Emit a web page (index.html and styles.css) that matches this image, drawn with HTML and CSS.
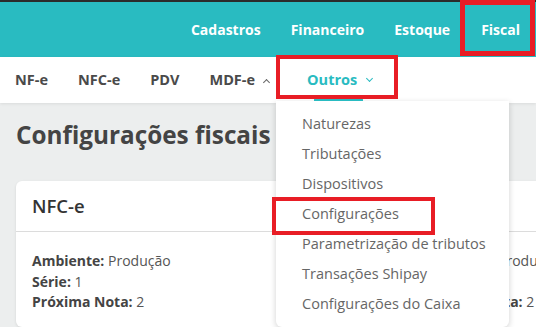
FILE: index.html
```html
<!DOCTYPE html>
<html lang="pt-BR">
<head>
    <meta charset="UTF-8">
    <meta name="viewport" content="width=device-width, initial-scale=1.0">
    <title>Configurações fiscais</title>
    <link rel="stylesheet" href="styles.css">
</head>
<body>
    <div class="topline"></div>
    <header class="main-menu">
        <a class="main-item">Cadastros</a>
        <a class="main-item">Financeiro</a>
        <a class="main-item">Estoque</a>
        <a class="main-item marked">Fiscal</a>
    </header>

    <nav class="sub-menu">
        <a class="sub-item">NF-e</a>
        <a class="sub-item">NFC-e</a>
        <a class="sub-item">PDV</a>
        <a class="sub-item">MDF-e <span class="caret up"></span></a>
        <div class="sub-drop">
            <a class="sub-item active">Outros <span class="caret down"></span></a>
            <ul class="dropdown">
                <li>Naturezas</li>
                <li>Tributações</li>
                <li>Dispositivos</li>
                <li class="marked">Configurações</li>
                <li>Parametrização de tributos</li>
                <li>Transações Shipay</li>
                <li>Configurações do Caixa</li>
            </ul>
        </div>
    </nav>

    <main class="content">
        <h1 class="page-title">Configurações fiscais</h1>
        <div class="cards">
            <div class="card">
                <div class="card-head">NFC-e</div>
                <div class="card-body">
                    <p><b>Ambiente:</b> Produção</p>
                    <p><b>Série:</b> 1</p>
                    <p><b>Próxima Nota:</b> 2</p>
                </div>
            </div>
            <div class="card">
                <div class="card-head">NF-e</div>
                <div class="card-body">
                    <p><b>Ambiente:</b> Produção</p>
                    <p><b>Série:</b> 1</p>
                    <p><b>Próxima Nota:</b> 2</p>
                </div>
            </div>
        </div>
    </main>
</body>
</html>
```

FILE: styles.css
```css
body {
    margin: 0;
    background-color: #eceeee;
    font-family: "Open Sans", "Noto Sans", sans-serif;
    color: #454545;
    width: 536px;
    overflow: hidden;
}

a {
    cursor: pointer;
}

.topline {
    height: 2px;
    background-color: #2b2b2b;
}

/* menu principal */
.main-menu {
    height: 55px;
    background-color: #29bbc1;
    display: flex;
    justify-content: flex-end;
    align-items: center;
    padding-right: 1px;
}

.main-item {
    color: #fff;
    font-weight: 700;
    font-size: 14px;
    padding: 0 15px;
    line-height: 55px;
    position: relative;
}

.main-item.marked {
    padding: 0 15px 0 16px;
}

/* marcação vermelha */
.marked {
    position: relative;
}

.main-item.marked::after {
    content: "";
    position: absolute;
    left: -5px;
    right: 0;
    top: -2px;
    bottom: 1px;
    border: 5px solid #e81d25;
}

/* submenu */
.sub-menu {
    height: 46px;
    background-color: #fff;
    display: flex;
    align-items: center;
    box-shadow: 0 1px 3px rgba(0, 0, 0, 0.08);
    position: relative;
    z-index: 2;
}

.sub-item {
    font-size: 14.5px;
    font-weight: 700;
    color: #4a4a4a;
    padding: 0 15px;
    line-height: 46px;
    display: flex;
    align-items: center;
    gap: 7px;
}

.sub-item.active {
    color: #29bbc1;
}

.caret {
    width: 4px;
    height: 4px;
    border-left: 1.3px solid currentColor;
    border-top: 1.3px solid currentColor;
    display: inline-block;
}

.caret.up {
    transform: rotate(45deg);
    margin-top: 4px;
    margin-left: 2px;
    color: #666;
}

.caret.down {
    transform: rotate(225deg);
    margin-top: -3px;
    margin-left: 3px;
}

.sub-drop {
    position: relative;
    margin-left: 8px;
    height: 46px;
}

.sub-drop::before {
    content: "";
    position: absolute;
    left: -16px;
    top: -2px;
    width: 114px;
    height: 36px;
    border: 4px solid #e81d25;
    z-index: 3;
}

.sub-drop::after {
    content: "";
    position: absolute;
    left: 22px;
    bottom: 2px;
    width: 49px;
    height: 4px;
    border-radius: 3px 3px 0 0;
    background-color: #29bbc1;
}

.dropdown {
    position: absolute;
    left: -16px;
    top: 44px;
    width: 233px;
    margin: 0;
    padding: 8px 0 8px;
    list-style: none;
    background-color: #fff;
    border-radius: 0 0 6px 6px;
    box-shadow: 0 2px 6px rgba(0, 0, 0, 0.18);
}

.dropdown li {
    font-size: 14.5px;
    color: #666;
    padding-left: 26px;
    line-height: 30px;
}

.dropdown li.marked::after {
    content: "";
    position: absolute;
    left: -4px;
    top: -2px;
    width: 155px;
    height: 30px;
    border: 4px solid #e81d25;
}

/* conteúdo */
.content {
    padding: 0 16px;
}

.page-title {
    font-size: 24.3px;
    font-weight: 700;
    color: #444;
    margin: 15px 0 30px;
}

.cards {
    display: grid;
    grid-template-columns: 358px 358px;
    gap: 32px;
}

.card {
    background-color: #fff;
    border-radius: 6px;
    box-shadow: 0 1px 3px rgba(0, 0, 0, 0.1);
}

.card-head {
    font-size: 18.5px;
    font-weight: 600;
    color: #333;
    padding: 0 16px;
    line-height: 50px;
    border-bottom: 1px solid #dcdcdc;
}

.card-body {
    padding: 19px 16px 14px;
}

.card-body p {
    margin: 0;
    font-size: 14px;
    line-height: 20.5px;
    color: #555;
}

.card-body b {
    color: #444;
}
```
